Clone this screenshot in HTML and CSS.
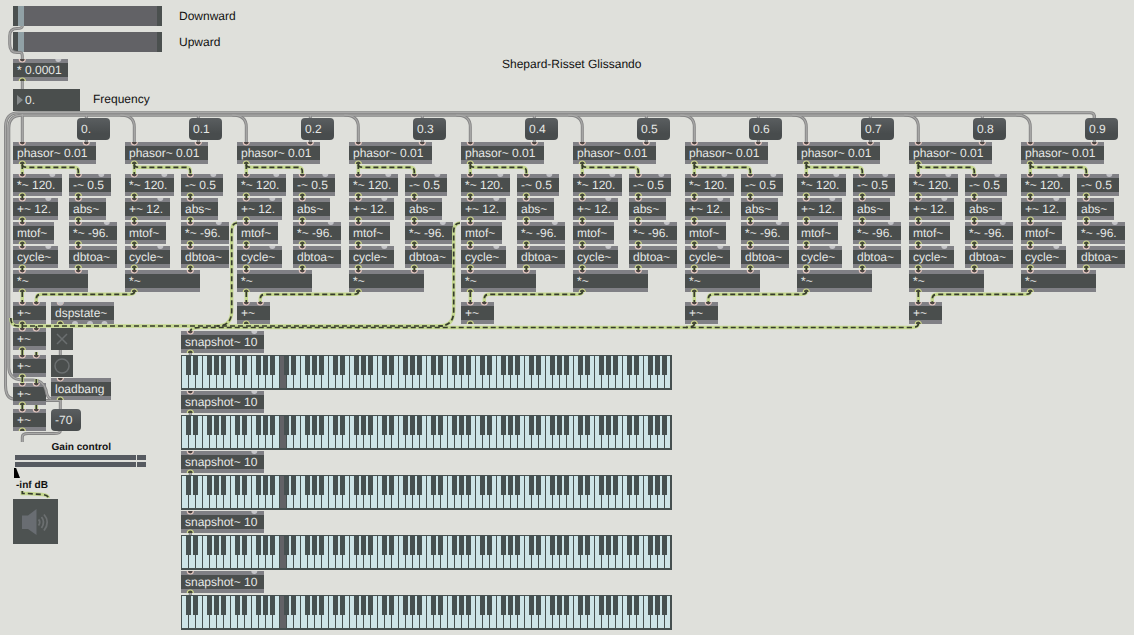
FILE: index.html
```html
<!DOCTYPE html>
<html lang="en">
<head>
<meta charset="utf-8">
<title>Shepard-Risset Glissando</title>
<link rel="stylesheet" href="styles.css">
</head>
<body>
<main class="patcher" id="patcher">
  <div class="slider slider-down"><i class="slider-knob"></i><i class="slider-track"></i></div>
  <div class="slider slider-up"><i class="slider-knob"></i><i class="slider-track"></i></div>
  <div class="comment c-down">Downward</div>
  <div class="comment c-up">Upward</div>
  <div class="comment c-title">Shepard-Risset Glissando</div>
  <div class="comment c-freq">Frequency</div>
  <div class="numbox"><i class="numbox-arrow"></i>0.</div>
  <div class="cell toggle"><svg viewBox="0 0 22 22"><path d="M6 6L16 16M16 6L6 16"/></svg></div>
  <div class="cell bang"><svg viewBox="0 0 22 22"><circle cx="11" cy="11" r="7"/></svg></div>
  <div class="comment c-gain">Gain control</div>
  <div class="gain">
    <i class="gain-bar"></i><i class="gain-bar"></i>
    <i class="gain-bar"></i><i class="gain-bar"></i>
  </div>
  <i class="gain-pointer"></i>
  <div class="comment c-db">-inf dB</div>
  <div class="dac"><svg viewBox="0 0 45 45">
    <path class="dac-body" d="M9 16.500H15L23.500 10V36L15 30H9Z"/>
    <path class="dac-wave" d="M25.500 20.500Q28 23 25.500 26.500M28.500 18Q32.500 23 28.500 29M31 15.500Q37.500 23 31 31.500"/>
  </svg></div>
</main>
<script src="patch.js"></script>
</body>
</html>
```
FILE: styles.css
```css
body {
  margin: 0;
  background: #dfe0db;
  font-family: "Liberation Sans", Arial, sans-serif;
  font-size: 12px;
  text-rendering: geometricPrecision;
}
.patcher {
  position: relative;
  width: 1134px;
  height: 635px;
  overflow: hidden;
}
.node, .message, .keyboard, .comment, .slider, .numbox, .cell,
.gain, .gain-pointer, .dac, .cables {
  position: absolute;
}
.node, .message, .numbox {
  box-sizing: border-box;
  height: 22px;
  padding-left: 4px;
  line-height: 22px;
  color: #e6e8e6;
  white-space: nowrap;
  background: #4a4e4d;
}
.node {
  border-top: 4px solid #808085;
  border-bottom: 4px solid #808085;
  line-height: 14px;
}
.message {
  border-radius: 4px;
  background: linear-gradient(#5a5e60, #484c4d 70%);
}
.numbox {
  left: 13px;
  top: 89px;
  width: 67px;
  padding-left: 12px;
}
.numbox-arrow {
  position: absolute;
  left: 4px;
  top: 6px;
  border-left: 6px solid #85898a;
  border-top: 5px solid transparent;
  border-bottom: 5px solid transparent;
}
.comment {
  line-height: 14px;
  color: #111;
  white-space: nowrap;
}
.c-down { left: 179px; top: 9px; }
.c-up { left: 179px; top: 35px; }
.c-title { left: 502px; top: 57px; }
.c-freq { left: 93px; top: 92px; }
.c-gain { left: 51.500px; top: 441px; font-size: 10.100px; font-weight: bold; }
.c-db { left: 16px; top: 479px; font-size: 10.100px; font-weight: bold; }
.slider {
  box-sizing: border-box;
  left: 13px;
  display: flex;
  width: 149px;
  height: 20px;
  padding: 0 5px;
  background: #4b504f;
}
.slider-down { top: 6px; }
.slider-up { top: 32px; }
.slider-knob { width: 6px; background: #91a1a6; }
.slider-track { flex: 1; background: #626266; }
.cell {
  left: 51px;
  width: 22px;
  height: 22px;
  background: #4a4e4d;
}
.toggle { top: 328px; }
.bang { top: 355px; }
.cell svg, .dac svg { display: block; fill: none; stroke: #6b6f70; stroke-width: 1.5; }
.gain {
  left: 15px;
  top: 455px;
  display: grid;
  grid-template-columns: 121px 9px;
  grid-auto-rows: 5px;
  gap: 2px 1px;
}
.gain-bar { background: #565a60; }
.gain-pointer {
  left: 14px;
  top: 468px;
  width: 6px;
  height: 10px;
  background: #000;
  clip-path: polygon(0 0, 35% 0, 100% 100%, 0 100%);
}
.dac {
  left: 13px;
  top: 499px;
  width: 45px;
  height: 45px;
  background: #4d5251;
}
.dac svg .dac-body { fill: #696d72; stroke: none; }
.dac svg .dac-wave { stroke-width: 1.8; }
.keyboard {
  box-sizing: border-box;
  left: 181px;
  display: flex;
  width: 491px;
  height: 35px;
  padding: 1px 0 2px 1px;
  background: #465050;
}
.key {
  position: relative;
  width: 6px;
  margin-right: 1px;
  background: #cde4e7;
}
.key:last-child { width: 5px; }
.key-on { background: #626266; }
.key-sharp::after {
  content: "";
  position: absolute;
  z-index: 1;
  left: 4px;
  top: 0;
  width: 5px;
  height: 19px;
  background: #465050;
}
.cables { left: 0; top: 0; fill: none; }
.cord-edge { stroke: #858585; stroke-width: 3; }
.cord-core { stroke: #a9a9a8; stroke-width: 1.2; }
.signal-edge { stroke: #c5d88f; stroke-width: 3.4; }
.signal-core { stroke: #363b2d; stroke-width: 1.7; stroke-dasharray: 5 3; }
.inlet { fill: #4b4442; stroke: #e6c9c2; stroke-width: 1.2; }
.outlet { fill: #45493b; stroke: #d2da8e; stroke-width: 1.2; }
.port-free { fill: #c4c4c8; }
```
FILE: patch.js
```javascript
const patcher = document.getElementById("patcher");
const cords = [];
const signals = [];
const ports = [];

function add(cls, x, y, w, text) {
  const el = document.createElement("div");
  el.className = cls;
  el.style.left = x + "px";
  el.style.top = y + "px";
  if (w) el.style.width = w + "px";
  el.textContent = text;
  patcher.appendChild(el);
  return el;
}

// Half discs that sit on the top edge (inlets) or bottom edge (outlets).
function inlet(x, y, free) {
  ports.push(`<path class="${free ? "port-free" : "inlet"}" d="M${x - 3} ${y}A3 3 0 0 0 ${x + 3} ${y}"/>`);
}
function outlet(x, y, free) {
  ports.push(`<path class="${free ? "port-free" : "outlet"}" d="M${x - 3} ${y}A3 3 0 0 1 ${x + 3} ${y}"/>`);
}
function node(x, y, w, text, freeRight) {
  add("node", x, y, w, text);
  inlet(x + 9.3, y);
  if (freeRight) inlet(x + w - 9.7, y, true);
  outlet(x + 9.3, y + 22);
}

node(13, 59, 55, "* 0.0001", true);

for (let i = 0; i < 10; i++) {
  const x = 13 + i * 112;
  const a = x + 9.3;
  const b = x + 65.3;
  add("message", x + 64, 118, 32.5, i ? "0." + i : "0.");
  node(x, 142, 83, "phasor~ 0.01");
  inlet(x + 73.3, 142);
  node(x, 174, 49, "*~ 120.", true);
  node(x + 56, 174, 42, "-~ 0.5", true);
  node(x, 198, 45, "+~ 12.", true);
  node(x + 56, 198, 37, "abs~");
  node(x, 222, 41, "mtof~");
  node(x + 56, 222, 47.5, "*~ -96.", true);
  node(x, 246, 45, "cycle~", true);
  node(x + 56, 246, 48, "dbtoa~");
  node(x, 270, 75, "*~");
  inlet(b, 270);

  if (i) cords.push(`M${a - 14} 115Q${a} 115 ${a} 127V142`);
  cords.push(`M${x + 73.3} 115V118`, `M${x + 73.3} 140V142`);
  signals.push(`M${a} 164V174`, `M${a} 165Q${a} 167.3 ${a + 5} 167.3H${b - 5}Q${b} 167.3 ${b} 171V174`);
  for (const y of [196, 220, 244, 268]) signals.push(`M${a} ${y}V${y + 2}`, `M${b} ${y}V${y + 2}`);

  if (i % 2 === 0) {
    node(x, 302, 33, "+~");
    inlet(x + 23.3, 302);
    signals.push(`M${a} 292V302`);
    const c = a + 112;
    signals.push(`M${c} 292Q${c} 294.3 ${c - 5} 294.3H${x + 28}Q${x + 23.3} 294.3 ${x + 23.3} 299V302`);
  }
}

// Mixing chain in the first column
for (const y of [328, 355, 383, 409]) {
  node(13, y, 33, "+~");
  inlet(36.3, y);
}
signals.push("M22.3 350V355", "M22.3 377V383", "M22.3 405V409", "M36.3 352V355", "M36.3 379V383", "M36.3 405V409");

node(51, 302, 63, "dspstate~");
inlet(60.3, 302, true);
[75, 90, 104.5].forEach(x => outlet(x, 324, true));
node(51, 378, 60, "loadbang");
add("message", 51, 409, 29.5, "-70");

// Keyboards with their samplers
const SHARPS = [true, true, false, true, true, true, false];
for (let k = 0; k < 5; k++) {
  const y = 331 + k * 60;
  node(181, y, 83, "snapshot~ 10", true);
  const keyboard = add("keyboard", 181, y + 24, 0, "");
  for (let n = 0; n < 70; n++) {
    const key = document.createElement("i");
    key.className = "key" + (SHARPS[n % 7] ? " key-sharp" : "") + (n === 14 ? " key-on" : "");
    keyboard.appendChild(key);
  }
  cords.push(`M190.3 ${y + 21}V${y + 24}`);
}

cords.push(
  "M22.3 26Q22.3 28.500 17 28.500Q9.700 28.500 9.700 36V44Q9.700 52.500 17 52.500H20Q22.3 52.500 22.3 56V59",
  "M22.3 81V89",
  "M22.3 114V142",
  "M60.3 400.500H46M13 399Q5.500 398 5.500 385V127Q5.500 112.700 19 112.700H1090Q1094.3 112.700 1094.3 116V118",
  "M60.3 400V409",
  "M51 399Q47 398 46 390Q43 380 33 380H22Q8.800 379 8.800 367V128Q8.800 115.200 22 115.200H1022",
  "M60.3 350V355",
  "M60.3 431Q60.3 433.500 54 433.500H28Q22.3 433.500 22.3 437V442"
);
signals.push(
  "M237 223Q231.700 223 231.700 232V311Q231.700 326 217 326",
  "M460 223Q453.700 223 453.700 232V311Q453.700 326 439 326",
  "M10.800 318Q10.800 326 18 326H445",
  "M918.3 324Q918.3 327.500 911 327.500H200Q191 327.500 190.3 331",
  "M694.3 324Q694.3 327.300 686 327.300",
  "M22.3 324V328", "M36.3 326V328",
  "M22.3 491V493.500H28L42 494.500Q48 495 48.500 498"
);

const draw = (list, cls) => list.map(d => `<path class="${cls}" d="${d}"/>`).join("");
patcher.insertAdjacentHTML("beforeend",
  `<svg class="cables" width="1134" height="635" viewBox="0 0 1134 635">` +
  draw(cords, "cord-edge") + draw(cords, "cord-core") +
  draw(signals, "signal-edge") + draw(signals, "signal-core") +
  ports.join("") + `</svg>`);
```
